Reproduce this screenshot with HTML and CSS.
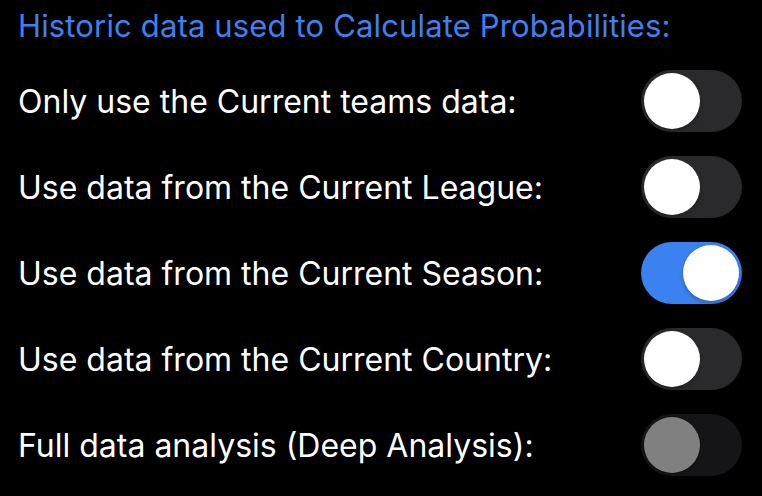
FILE: index.html
```html
<!DOCTYPE html>
<html lang="en">
<head>
  <meta charset="UTF-8">
  <meta name="viewport" content="width=device-width, initial-scale=1.0">
  <title>Probability Settings</title>
  <link rel="stylesheet" href="styles.css">
</head>
<body>
  <h2 class="section-title">Historic data used to Calculate Probabilities:</h2>
  <div class="settings">
    <label class="row">
      <span class="row-label">Only use the Current teams data:</span>
      <input type="checkbox" class="switch">
    </label>
    <label class="row">
      <span class="row-label">Use data from the Current League:</span>
      <input type="checkbox" class="switch">
    </label>
    <label class="row">
      <span class="row-label">Use data from the Current Season:</span>
      <input type="checkbox" class="switch" checked>
    </label>
    <label class="row">
      <span class="row-label">Use data from the Current Country:</span>
      <input type="checkbox" class="switch">
    </label>
    <label class="row">
      <span class="row-label">Full data analysis (Deep Analysis):</span>
      <input type="checkbox" class="switch" disabled>
    </label>
  </div>
</body>
</html>
```

FILE: styles.css
```css
body {
  font-family: 'Inter', 'Liberation Sans', sans-serif;
  margin: 0;
  background: #000;
  color: #fff;
  padding: 0 20px 0 18px;
}

.section-title {
  margin: 0;
  height: 58px;
  font-size: 31px;
  font-weight: 400;
  letter-spacing: 0.15px;
  line-height: 52px;
  color: #3b82f0;
}

.settings {
  display: flex;
  flex-direction: column;
}

.row {
  display: flex;
  align-items: center;
  justify-content: space-between;
  height: 86px;
}

.row-label {
  font-size: 32px;
}

.switch {
  appearance: none;
  margin: 0;
  position: relative;
  width: 101px;
  height: 62px;
  border-radius: 31px;
  background: #2a2a2c;
  cursor: pointer;
  transition: background 0.3s ease;
}

.switch::before {
  content: "";
  position: absolute;
  top: 3px;
  left: 3px;
  width: 56px;
  height: 56px;
  border-radius: 50%;
  background: #fff;
  box-shadow: 0 2px 4px rgba(0, 0, 0, 0.25);
  transition: left 0.3s ease;
}

.switch:checked {
  background: #3b82f0;
}

.switch:checked::before {
  left: 42px;
}

.switch:disabled {
  background: #151517;
  cursor: default;
}

.switch:disabled::before {
  background: #808080;
}
```
